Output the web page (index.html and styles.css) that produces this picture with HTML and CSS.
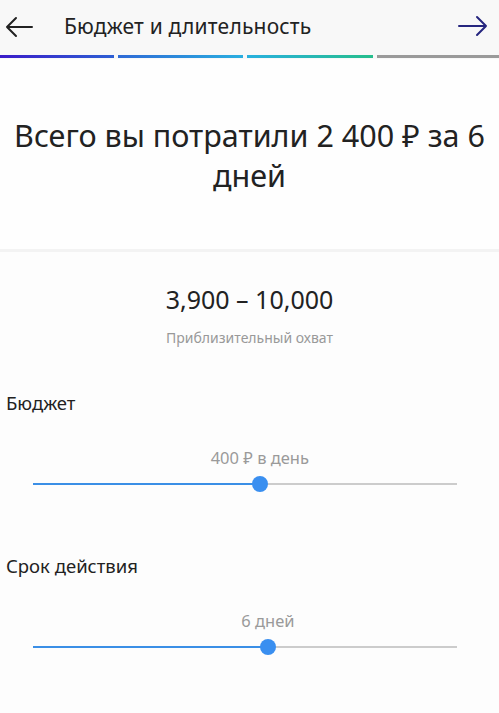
FILE: index.html
```html
<!DOCTYPE html>
<html lang="ru">
<head>
<meta charset="utf-8">
<title>Бюджет и длительность</title>
<link rel="stylesheet" href="styles.css">
</head>
<body>
<div class="screen">
  <header class="topbar">
    <div class="bar-row">
      <svg class="icon back" width="30" height="22" viewBox="0 0 30 22">
        <path d="M28 11H3M12 2L3 11l9 9" fill="none" stroke="#222" stroke-width="2" stroke-linecap="round" stroke-linejoin="round"/>
      </svg>
      <h1 class="title">Бюджет и длительность</h1>
      <svg class="icon next" width="32" height="22" viewBox="0 0 32 22">
        <path d="M2 11h27M20 2l9 9-9 9" fill="none" stroke="#26267f" stroke-width="2" stroke-linecap="round" stroke-linejoin="round"/>
      </svg>
    </div>
    <div class="steps">
      <span class="step s1"></span>
      <span class="step s2"></span>
      <span class="step s3"></span>
      <span class="step s4"></span>
    </div>
  </header>

  <section class="summary">
    <p class="total">Всего вы потратили 2 400 ₽ за 6 дней</p>
  </section>

  <section class="reach">
    <div class="reach-value">3,900 – 10,000</div>
    <div class="reach-label">Приблизительный охват</div>
  </section>

  <section class="field">
    <div class="field-label">Бюджет</div>
    <div class="slider">
      <div class="slider-value" style="margin-left: 53.5%">400 ₽ в день</div>
      <div class="track">
        <div class="fill" style="width: 53.5%"></div>
        <div class="thumb" style="left: 53.5%"></div>
      </div>
    </div>
  </section>

  <section class="field">
    <div class="field-label">Срок действия</div>
    <div class="slider">
      <div class="slider-value" style="margin-left: 55.4%">6 дней</div>
      <div class="track">
        <div class="fill" style="width: 55.4%"></div>
        <div class="thumb" style="left: 55.4%"></div>
      </div>
    </div>
  </section>
</div>
</body>
</html>
```

FILE: styles.css
```css
html, body {
  margin: 0;
  padding: 0;
  background: #fdfdfd;
}

body {
  font-family: "Noto Sans", "DejaVu Sans", sans-serif;
  color: #222;
}

.screen {
  width: 499px;
  height: 713px;
  overflow: hidden;
}

/* Header with navigation arrows and step progress */
.topbar {
  background: #f8f8f8;
  padding-bottom: 1px;
}

.bar-row {
  height: 52px;
  display: flex;
  align-items: center;
  padding: 0 10px 0 4px;
}

.icon {
  flex: none;
}

.back {
  margin-top: 1px;
}

.title {
  flex: 1;
  margin: 0 0 0 30px;
  font-size: 21px;
  font-weight: 400;
  color: #222;
  letter-spacing: 0.2px;
}

.steps {
  display: flex;
  gap: 4px;
  height: 3px;
  margin-top: 3px;
}

.step {
  height: 3px;
  display: block;
}

.s1 { width: 114px; background: linear-gradient(90deg, #3a1cc9, #2d5fd4); }
.s2 { width: 125px; background: linear-gradient(90deg, #2e6ad6, #2aaee0); }
.s3 { width: 126px; background: linear-gradient(90deg, #28b0df, #26be8c); }
.s4 { flex: 1; background: #9a9a9a; }

/* Total spend */
.summary {
  box-sizing: border-box;
  padding: 56px 8px 0;
  height: 193px;
  border-bottom: 3px solid #f3f3f3;
  background: #fefefe;
}

.total {
  margin: 0;
  text-align: center;
  font-size: 30.5px;
  line-height: 40px;
  color: #222;
}

/* Estimated reach */
.reach {
  text-align: center;
  padding-top: 31px;
}

.reach-value {
  font-size: 25px;
  line-height: 32px;
  color: #222;
}

.reach-label {
  margin-top: 13px;
  font-size: 14px;
  color: #999;
}

/* Slider fields */
.field {
  padding: 0 6px;
}

.reach + .field {
  margin-top: 43px;
}

.field + .field {
  margin-top: 68px;
}

.field-label {
  font-size: 18.5px;
  line-height: 26px;
  color: #222;
}

.slider {
  padding: 0 36px 0 27px;
  margin-top: 31px;
}

.slider-value {
  width: max-content;
  transform: translateX(-50%);
  font-size: 16.5px;
  line-height: 22px;
  color: #9a9a9a;
}

.track {
  position: relative;
  height: 2px;
  margin-top: 14px;
  background: #cccccc;
}

.fill {
  height: 2px;
  background: #3b8fe6;
}

.thumb {
  position: absolute;
  top: 50%;
  width: 16px;
  height: 16px;
  margin: -8px 0 0 -8px;
  border-radius: 50%;
  background: #3a8ff0;
}
```
